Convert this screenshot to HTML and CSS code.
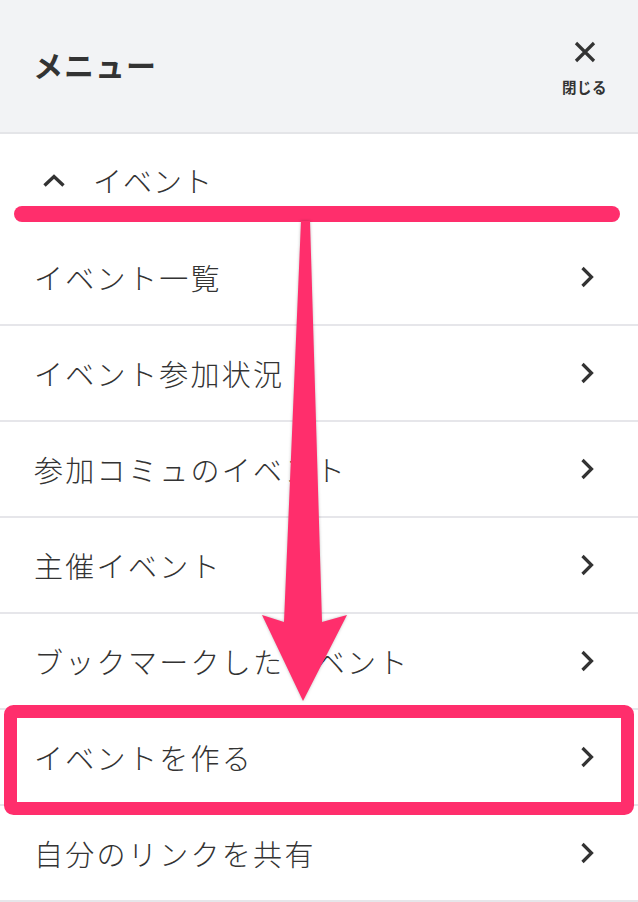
FILE: index.html
```html
<!DOCTYPE html>
<html lang="ja">
<head>
<meta charset="utf-8">
<title>メニュー</title>
<link rel="stylesheet" href="styles.css">
</head>
<body>
<div class="page">
  <header class="menu-header">
    <h1 class="menu-title">メニュー</h1>
    <button class="close-btn" type="button">
      <svg class="close-icon" viewBox="0 0 22 22" width="22" height="22"><path d="M2 2 L20 20 M20 2 L2 20"/></svg>
      <span class="close-label">閉じる</span>
    </button>
  </header>
  <div class="section-head">
    <svg class="chev-up" viewBox="0 0 24 15" width="24" height="15"><path d="M2.5 12.5 L12 3.5 L21.5 12.5"/></svg>
    <span class="section-title">イベント</span>
  </div>
  <ul class="menu-list">
    <li class="menu-item"><span class="item-label">イベント一覧</span><svg class="chev-right" viewBox="0 0 14 22" width="14" height="22"><path d="M2.5 2 L11.5 11 L2.5 20"/></svg></li>
    <li class="menu-item"><span class="item-label">イベント参加状況</span><svg class="chev-right" viewBox="0 0 14 22" width="14" height="22"><path d="M2.5 2 L11.5 11 L2.5 20"/></svg></li>
    <li class="menu-item"><span class="item-label">参加コミュのイベント</span><svg class="chev-right" viewBox="0 0 14 22" width="14" height="22"><path d="M2.5 2 L11.5 11 L2.5 20"/></svg></li>
    <li class="menu-item"><span class="item-label">主催イベント</span><svg class="chev-right" viewBox="0 0 14 22" width="14" height="22"><path d="M2.5 2 L11.5 11 L2.5 20"/></svg></li>
    <li class="menu-item"><span class="item-label">ブックマークしたイベント</span><svg class="chev-right" viewBox="0 0 14 22" width="14" height="22"><path d="M2.5 2 L11.5 11 L2.5 20"/></svg></li>
    <li class="menu-item"><span class="item-label">イベントを作る</span><svg class="chev-right" viewBox="0 0 14 22" width="14" height="22"><path d="M2.5 2 L11.5 11 L2.5 20"/></svg></li>
    <li class="menu-item"><span class="item-label">自分のリンクを共有</span><svg class="chev-right" viewBox="0 0 14 22" width="14" height="22"><path d="M2.5 2 L11.5 11 L2.5 20"/></svg></li>
  </ul>

  <svg class="annotation" viewBox="0 0 638 902" width="638" height="902">
    <rect class="anno-fill" x="14" y="206" width="606" height="16" rx="8"/>
    <polygon class="anno-fill anno-arrow" points="301,221 310,221 322,622 347,615 303,701 262,615 284,622"/>
    <rect class="anno-box" x="10.5" y="711.5" width="617" height="97" rx="3"/>
  </svg>
</div>
</body>
</html>
```

FILE: styles.css
```css
html, body {
  margin: 0;
  padding: 0;
  background: #ffffff;
}

.page {
  position: relative;
  width: 638px;
  height: 902px;
  overflow: hidden;
  font-family: "Noto Sans CJK JP", "Noto Sans", sans-serif;
  color: #333333;
}

.menu-header {
  height: 132px;
  background: #f2f3f5;
  border-bottom: 2px solid #e4e5e8;
  display: flex;
  align-items: center;
  justify-content: space-between;
  padding: 0 31px 0 33px;
  box-sizing: content-box;
}

.menu-title {
  margin: 0;
  font-size: 30px;
  font-weight: 700;
  letter-spacing: 1px;
  line-height: 1;
  color: #333333;
  padding-bottom: 4px;
}

.close-btn {
  border: 0;
  background: transparent;
  padding: 0;
  display: flex;
  flex-direction: column;
  align-items: center;
  gap: 17px;
  margin-top: 4px;
  color: #333333;
  font-family: inherit;
}

.close-icon path {
  stroke: #333333;
  stroke-width: 3.2;
  fill: none;
}

.close-label {
  font-size: 14.5px;
  font-weight: 700;
  letter-spacing: 0.5px;
  line-height: 1;
}

.section-head {
  height: 96px;
  display: flex;
  align-items: center;
  padding-left: 42px;
  padding-bottom: 4px;
  box-sizing: border-box;
  gap: 27px;
}

.chev-up path {
  stroke: #333333;
  stroke-width: 3.4;
  fill: none;
}

.section-title {
  font-size: 29px;
  font-weight: 300;
  letter-spacing: 1px;
  line-height: 1;
}

.menu-list {
  list-style: none;
  margin: 0;
  padding: 0;
}

.menu-item {
  height: 94px;
  border-bottom: 2px solid #e6e6ea;
  display: flex;
  align-items: center;
  justify-content: space-between;
  padding: 0 44px 0 34px;
}

.item-label {
  font-size: 29px;
  font-weight: 300;
  letter-spacing: 2.3px;
  line-height: 1;
}

.chev-right path {
  stroke: #333333;
  stroke-width: 3.2;
  fill: none;
}

.annotation {
  position: absolute;
  top: 0;
  left: 0;
  pointer-events: none;
}

.anno-fill {
  fill: #ff2e6c;
}

.anno-arrow {
  filter: drop-shadow(0 0 1.5px rgba(0, 0, 0, 0.25));
}

.anno-box {
  fill: none;
  stroke: #ff2e6c;
  stroke-width: 13;
}
```
